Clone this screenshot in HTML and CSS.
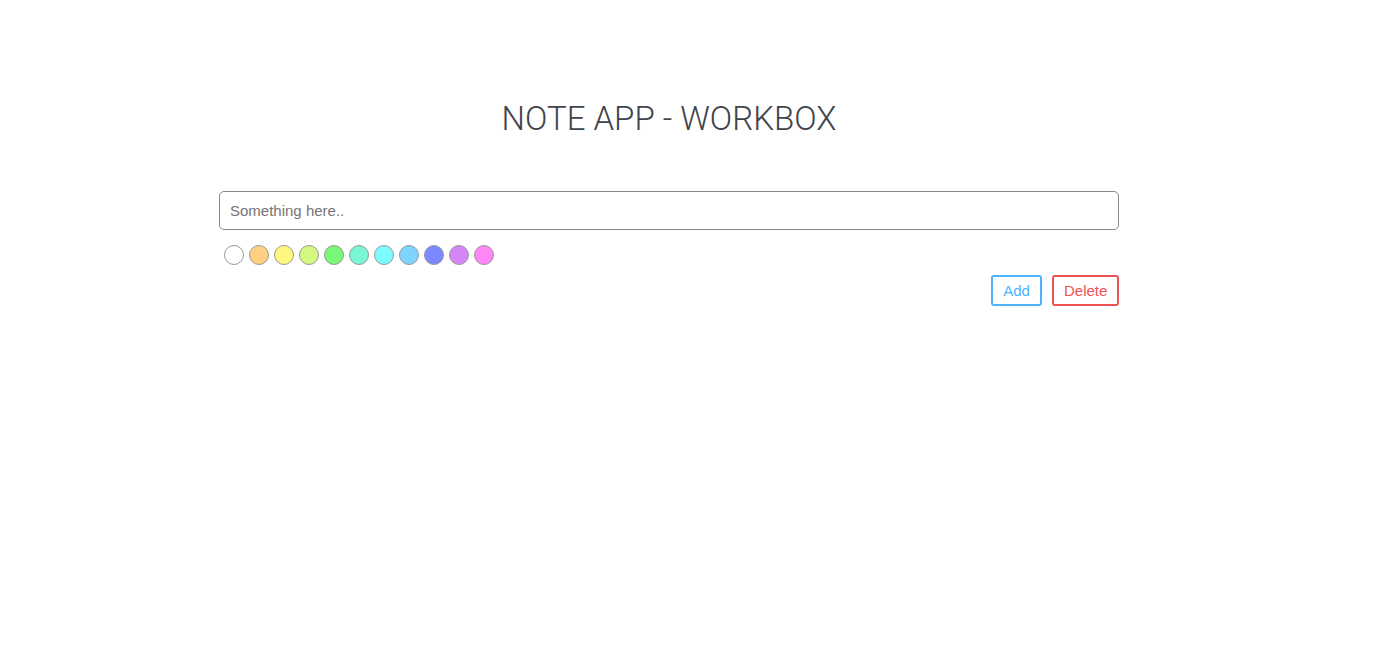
FILE: index.html
```html
<!DOCTYPE html>
<html lang="en">
<head>
<meta charset="utf-8">
<title>Note App - Workbox</title>
<link rel="stylesheet" href="styles.css">
</head>
<body>
<main class="app">
  <h1 class="title">NOTE APP - WORKBOX</h1>
  <input class="note-input" type="text" placeholder="Something here..">
  <div class="colors">
    <span class="dot c1"></span>
    <span class="dot c2"></span>
    <span class="dot c3"></span>
    <span class="dot c4"></span>
    <span class="dot c5"></span>
    <span class="dot c6"></span>
    <span class="dot c7"></span>
    <span class="dot c8"></span>
    <span class="dot c9"></span>
    <span class="dot c10"></span>
    <span class="dot c11"></span>
  </div>
  <div class="actions">
    <button class="btn btn-add">Add</button>
    <button class="btn btn-delete">Delete</button>
  </div>
</main>
</body>
</html>
```
FILE: styles.css
```css
html, body {
  margin: 0;
  padding: 0;
  background: #ffffff;
}
body {
  font-family: "Liberation Sans", Arial, sans-serif;
}
.app {
  width: 900px;
  margin-left: 219px;
  padding-top: 97px;
  display: flex;
  flex-direction: column;
}
.title {
  margin: 0 0 50px;
  text-align: center;
  font-family: Roboto, Lato, sans-serif;
  font-weight: 300;
  font-size: 33px;
  line-height: 44px;
  color: #3f444b;
}
.note-input {
  box-sizing: border-box;
  width: 900px;
  height: 39px;
  border: 1px solid #8a8a8a;
  border-radius: 5px;
  padding: 0 10px;
  font-family: "Liberation Sans", Arial, sans-serif;
  font-size: 15px;
  color: #333;
  outline: none;
}
.note-input::placeholder {
  color: #757575;
}
.colors {
  display: flex;
  gap: 5px;
  padding-left: 5px;
  margin-top: 15px;
}
.dot {
  box-sizing: border-box;
  width: 20px;
  height: 20px;
  border-radius: 50%;
  border: 1px solid #999;
}
.c1 { background: #ffffff; }
.c2 { background: #ffd080; }
.c3 { background: #fff780; }
.c4 { background: #d4f780; }
.c5 { background: #78f778; }
.c6 { background: #78f7d4; }
.c7 { background: #7cfbff; }
.c8 { background: #7cd4ff; }
.c9 { background: #7c88ff; }
.c10 { background: #d486f7; }
.c11 { background: #ff86f7; }
.actions {
  display: flex;
  justify-content: flex-end;
  gap: 10px;
  margin-top: 10px;
}
.btn {
  box-sizing: border-box;
  height: 31px;
  padding: 0 10px;
  background: #fff;
  border-radius: 3px;
  font-family: "Liberation Sans", Arial, sans-serif;
  font-size: 15px;
  cursor: pointer;
}
.btn-add {
  border: 2px solid #4db3ff;
  color: #4db3ff;
  width: 51px;
}
.btn-delete {
  border: 2px solid #ee5353;
  color: #ee5353;
  width: 67px;
}
```
